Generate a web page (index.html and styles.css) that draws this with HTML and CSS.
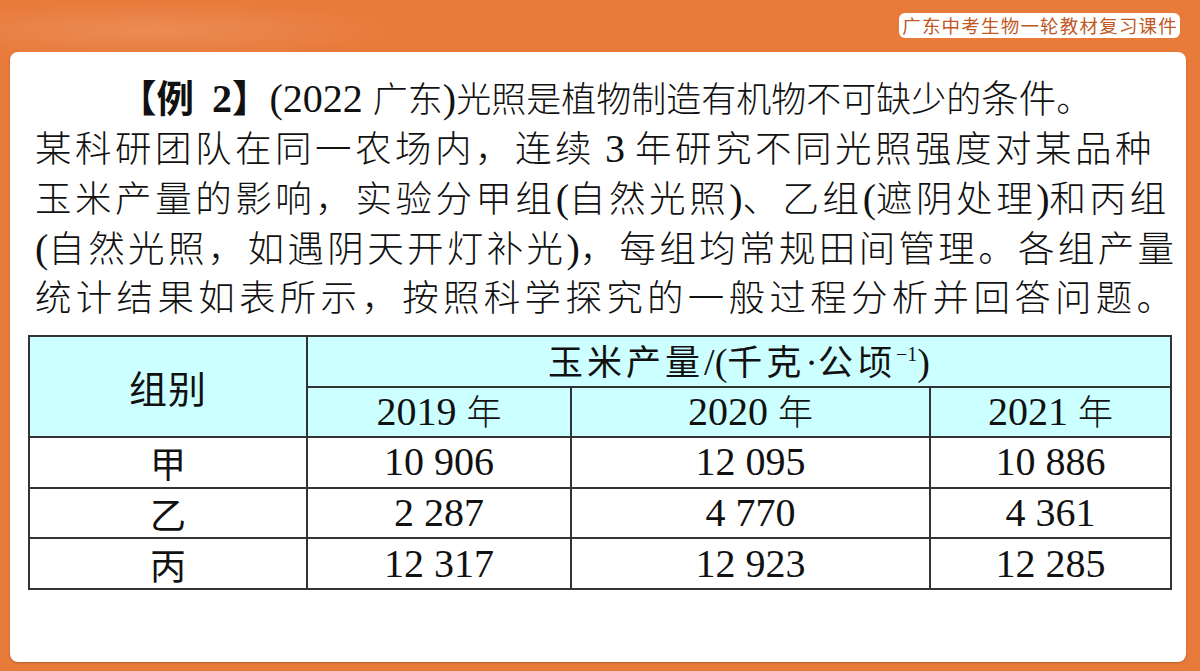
FILE: index.html
```html
<!DOCTYPE html>
<html lang="zh-CN">
<head>
<meta charset="utf-8">
<title>例2</title>
<link rel="stylesheet" href="styles.css">
</head>
<body>
<div class="page">
  <header class="top">
    <span class="badge">广东中考生物一轮教材复习课件</span>
  </header>
  <main class="card">
    <div class="text">
      <p class="line first"><b class="tag">【例<span class="tagnum">&nbsp;2</span>】</b><span class="lat">(2022 </span>广东<span class="lat">)</span>光照是植物制造有机物不可缺少的<span class="big">条件</span>。</p>
      <p class="line l2">某科研团队在同一农场内，连续<span class="lat"> 3 </span>年研究不同光照强度对某品种</p>
      <p class="line l3">玉米产量的影响，实验分甲组<span class="lat">(</span>自然光照<span class="lat">)</span>、乙组<span class="lat">(</span>遮阴处理<span class="lat">)</span>和丙组</p>
      <p class="line l4"><span class="lat">(</span>自然光照，如遇阴天开灯补光<span class="lat">)</span>，每组均常规田间管理。各组产量</p>
      <p class="line l5">统计结果如表所示，按照科学探究的一般过程分析并回答问题。</p>
    </div>
    <table class="data">
      <colgroup>
        <col class="c1"><col class="c2"><col class="c3"><col class="c4">
      </colgroup>
      <tr class="head">
        <th rowspan="2" class="grp">组别</th>
        <th colspan="3" class="unit">玉米产量<span class="lat">/(</span>千克<span class="lat">·</span>公顷<sup class="sup">−1</sup><span class="lat">)</span></th>
      </tr>
      <tr class="head">
        <th class="num">2019 <span class="cj">年</span></th>
        <th class="num">2020 <span class="cj">年</span></th>
        <th class="num">2021 <span class="cj">年</span></th>
      </tr>
      <tr>
        <td class="cjcell">甲</td><td class="num">10 906</td><td class="num">12 095</td><td class="num">10 886</td>
      </tr>
      <tr>
        <td class="cjcell">乙</td><td class="num">2 287</td><td class="num">4 770</td><td class="num">4 361</td>
      </tr>
      <tr>
        <td class="cjcell">丙</td><td class="num">12 317</td><td class="num">12 923</td><td class="num">12 285</td>
      </tr>
    </table>
  </main>
</div>
</body>
</html>
```
FILE: styles.css
```css
* { box-sizing: border-box; }
html, body { margin: 0; padding: 0; }
body {
  width: 1200px;
  height: 671px;
  overflow: hidden;
  background: #e87a3a;
}
.page {
  width: 1200px;
  height: 671px;
  display: flex;
  flex-direction: column;
  padding: 0 14px 9px 10px;
  background:
    radial-gradient(ellipse 260px 30px at 150px 30px, rgba(255,255,255,0.13), rgba(255,255,255,0) 100%),
    #e87a3a;
}
.top {
  height: 52px;
  display: flex;
  justify-content: flex-end;
  align-items: flex-start;
  padding-top: 13px;
  padding-right: 6px;
}
.badge {
  display: block;
  height: 25px;
  line-height: 25px;
  padding: 0 2px 0 3px;
  background: #fff;
  border-radius: 6px;
  color: #c0581f;
  font-family: "Noto Sans CJK SC", sans-serif;
  font-size: 18.5px;
  letter-spacing: 1.2px;
  white-space: nowrap;
}
.card {
  flex: 1;
  background: #fff;
  border-radius: 8px;
  box-shadow: 0 1px 2px rgba(90,40,10,0.35);
  padding: 22px 16px 0 18px;
}
.text {
  padding-left: 7px;
  font-family: "Liberation Serif", "Noto Sans CJK SC", serif;
  font-size: 36.5px;
  font-weight: 300;
  letter-spacing: 4.3px;
  color: #111;
}
.line {
  margin: 0;
  height: 50px;
  line-height: 50px;
  white-space: nowrap;
}
.first {
  padding-left: 84px;
  font-size: 35px;
  letter-spacing: 0;
}
.big { font-size: 37.5px; }
.l2 { letter-spacing: 3.5px; }
.l3 { letter-spacing: 3.55px; }
.l4 { letter-spacing: 3.35px; }
.l5 { letter-spacing: 4.3px; }
.tag {
  font-weight: 700;
  font-size: 37.5px;
  letter-spacing: 0;
}
.tagnum {
  font-family: "Liberation Serif", serif;
  font-size: 40px;
  padding-left: 8px;
}
.lat {
  font-family: "Liberation Serif", serif;
  font-size: 40px;
  letter-spacing: 0;
  font-weight: 400;
}
.data {
  margin-top: 11px;
  width: 1142px;
  border-collapse: collapse;
  table-layout: fixed;
  color: #111;
  font-family: "Liberation Serif", "Noto Sans CJK SC", serif;
}
.c1 { width: 278px; }
.c2 { width: 264px; }
.c3 { width: 359px; }
.c4 { width: 241px; }
.data th, .data td {
  border: 2px solid #333;
  padding: 0;
  text-align: center;
  vertical-align: middle;
  font-weight: 400;
  line-height: 1;
}
.data tr { height: 50.6px; }
.head th { background: #ccffff; }
.grp {
  font-family: "Noto Sans CJK SC", sans-serif;
  font-size: 38px;
  letter-spacing: 1px;
}
.unit {
  font-family: "Noto Sans CJK SC", sans-serif;
  font-size: 35px;
  letter-spacing: 4px;
}
.unit .lat { font-size: 38px; }
.sup {
  font-family: "Liberation Serif", serif;
  font-size: 20px;
  letter-spacing: 0;
  vertical-align: 14px;
}
.num {
  font-family: "Liberation Serif", serif;
  font-size: 40px;
}
.cj {
  font-family: "Noto Sans CJK SC", sans-serif;
  font-size: 35px;
  font-weight: 300;
}
.cjcell {
  font-family: "Noto Sans CJK SC", sans-serif;
  font-size: 36px;
}
```
